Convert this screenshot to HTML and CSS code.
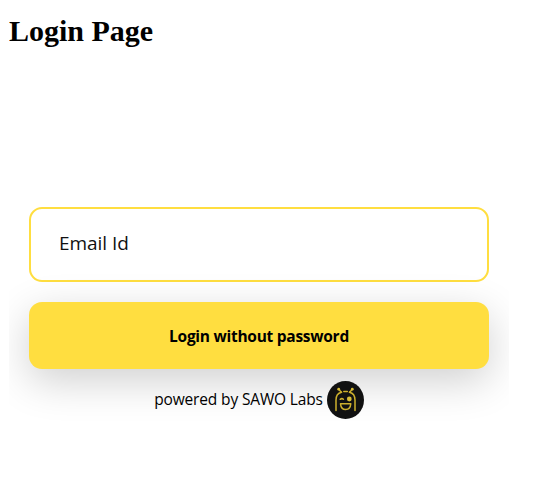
FILE: index.html
```
<!DOCTYPE html>
<html lang="en">
<head>
<meta charset="utf-8">
<title>Login Page</title>
<link rel="stylesheet" href="styles.css">
</head>
<body>
<h1 class="title">Login Page</h1>
<main class="login-frame">
  <form class="login-form">
    <div class="field" role="textbox" aria-label="Email Id"><span class="field-label">Email Id</span></div>
    <button class="submit" type="button"><span class="submit-label">Login without password</span></button>
    <div class="powered">
      <span class="powered-text">powered by SAWO Labs</span>
      <svg class="logo" viewBox="0 0 37 38" aria-hidden="true">
        <ellipse cx="18.5" cy="19" rx="18.5" ry="19" fill="#111"/>
        <g fill="none" stroke="#cdb02d" stroke-width="1.5" stroke-linecap="round" stroke-linejoin="round">
          <path d="M9 29.5V19Q9 12.5 14.5 11.2M28 29.5V19Q28 12.5 22.5 11.2M16.8 10.6h3.5"/>
          <path d="M14.5 11.2L11.8 8.4M22.5 11.2L25.2 8.4"/>
          <path d="M13.2 18.3q1.7-1.4 3.2 0"/>
          <path d="M13.5 22.8h10.3q-.5 5.8-5.1 5.8t-5.2-5.8z"/>
        </g>
        <g fill="#d8bd38"><circle cx="11.7" cy="8.2" r="1.4"/><circle cx="25.3" cy="8.2" r="1.4"/><circle cx="22.3" cy="18" r="2.4"/></g>
      </svg>
    </div>
  </form>
</main>
</body>
</html>
```
FILE: styles.css
```
* { box-sizing: border-box; }
body { margin: 0 9px; background: #fff; color: #000; }
.title {
  margin: 0;
  padding-top: 13px;
  height: 187px;
  font: bold 30px/36px "Liberation Serif", serif;
}
.login-frame {
  width: 500px;
  height: 300px;
  overflow: hidden;
  font-family: "Open Sans", "Noto Sans", sans-serif;
}
.login-form {
  display: flex;
  flex-direction: column;
  padding: 20px;
}
.field {
  display: flex;
  align-items: center;
  height: 75px;
  padding: 0 28px 3px;
  border: 2px solid #ffde40;
  border-radius: 13px;
  font-size: 19px;
  letter-spacing: -.05px;
  color: #111;
}
.submit {
  height: 67px;
  margin-top: 20px;
  padding: 0;
  border: 0;
  border-radius: 13px;
  background: #ffde40;
  box-shadow: 0 12px 42px rgba(0, 0, 0, .19);
  color: #000;
  font: bold 15.5px "Open Sans", "Noto Sans", sans-serif;
  letter-spacing: -.27px;
}
.powered {
  position: relative;
  display: flex;
  justify-content: center;
  align-items: center;
  gap: 4px;
  height: 38px;
  margin-top: 12px;
  font-size: 15.5px;
  letter-spacing: -.15px;
}
.powered-text { padding-bottom: 3px; }
.logo { width: 37px; height: 38px; }
```
